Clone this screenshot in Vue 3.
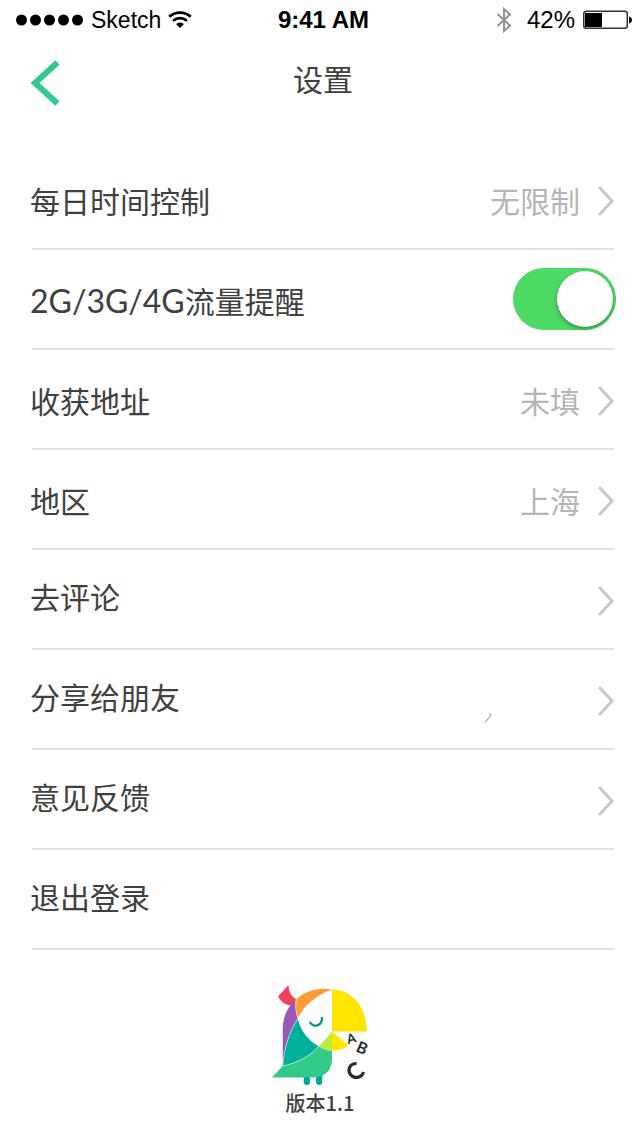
<script setup>
import { ref } from 'vue'

const reminder = ref(true)

const rows = [
  { id: 'limit', label: '每日时间控制', value: '无限制', kind: 'link' },
  { id: 'data', prefix: '2G/3G/4G', label: '流量提醒', kind: 'switch' },
  { id: 'address', label: '收获地址', value: '未填', kind: 'link' },
  { id: 'region', label: '地区', value: '上海', kind: 'link' },
  { id: 'review', label: '去评论', kind: 'link', compact: true },
  { id: 'share', label: '分享给朋友', kind: 'link', compact: true, tick: true },
  { id: 'feedback', label: '意见反馈', kind: 'link', compact: true },
  { id: 'logout', label: '退出登录', kind: 'action', compact: true }
]
</script>

<template>
  <div class="screen">
    <div class="status">
      <div class="carrier">
        <svg class="dots" viewBox="0 0 68 12" aria-hidden="true">
          <circle v-for="n in 5" :key="n" :cx="14 * n - 8.5" cy="6" r="5.5" />
        </svg>
        <span>Sketch</span>
        <svg class="wifi" viewBox="0 0 24 18" aria-hidden="true">
          <path d="M1.2 5.8C7 .2 17 .2 22.800 5.800" />
          <path d="M5 9.900C9 6.200 15 6.200 19 9.900" />
          <path class="solid" d="M8 13Q12 10 16 13L12 17Z" />
        </svg>
      </div>
      <strong class="clock">9:41 AM</strong>
      <div class="power">
        <svg class="bluetooth" viewBox="0 0 16 26" aria-hidden="true">
          <path d="M1.500 7L14 18.500L8 24V2L14 7.500L1.500 19" />
        </svg>
        <span>42%</span>
        <svg class="battery" viewBox="0 0 49 20" aria-hidden="true">
          <rect class="case" x=".75" y="1.250" width="43.500" height="17" rx="2.500" />
          <rect x="2" y="3" width="17" height="14" />
          <path d="M46 6.500Q49 7.500 49 10T46 13.500Z" />
        </svg>
      </div>
    </div>

    <header class="bar">
      <button class="back" type="button" aria-label="返回">
        <svg viewBox="0 0 30 46" aria-hidden="true"><path d="M27.500 2.500L5 23L27.500 43.500" /></svg>
      </button>
      <h1>设置</h1>
    </header>

    <ul class="list">
      <li v-for="row in rows" :key="row.id">
        <label v-if="row.kind === 'switch'" class="row">
          <span class="label"><span class="latin">{{ row.prefix }}</span>{{ row.label }}</span>
          <input v-model="reminder" class="switch" type="checkbox" role="switch" />
        </label>
        <button v-else-if="row.kind === 'action'" type="button" class="row compact">
          <span class="label">{{ row.label }}</span>
        </button>
        <a v-else class="row" :class="{ compact: row.compact }" :href="'#' + row.id">
          <span class="label">{{ row.label }}</span>
          <span v-if="row.value" class="value">{{ row.value }}</span>
          <svg v-if="row.tick" class="tick" viewBox="0 0 8 12" aria-hidden="true">
            <path d="M1 10.500L6 4.500L6.500 1.500" />
          </svg>
          <svg class="chevron" viewBox="0 0 16 30" aria-hidden="true"><path d="M2 2L14 15L2 28" /></svg>
        </a>
      </li>
    </ul>

    <footer class="about">
      <svg class="logo" viewBox="272 985 96 101" aria-hidden="true">
        <path fill="#00a896" d="M303.700 1075H310V1082Q310 1085 306.900 1085T303.700 1082ZM316 1075H322.300V1082Q322.300 1085 319.200 1085T316 1082Z" />
        <path fill="#f2415d" d="M288.500 985L278 996.500C281 1001.500 285 1005 291 1005.500L296.300 999.500C291 996 288.500 991 288.500 985Z" />
        <path fill="#ff9a35" d="M296 999.500C306 990 319 987 332 989.500C316 995 303.500 1006 297.700 1018.500Q294.500 1008 296 999.500Z" />
        <path fill="#9b59b6" d="M296 999.500C287 1007 282.700 1018 282.700 1029V1066C284 1048 289 1033 297.700 1018.500Q294.500 1008 296 999.500Z" />
        <path fill="#ffe600" d="M332 989.500C351 989.500 366.700 1006 366.700 1031.500H332Z" />
        <path fill="#00b09b" d="M297.700 1018.500C300.500 1031 308 1040 318.700 1046.500C309 1057 297 1063 282.700 1066C284 1048 289 1033 297.700 1018.500Z" />
        <path fill="#30cb8b" d="M272 1077.500L282.700 1066C297 1063 309 1057 318.700 1046.500Q325 1050.500 332 1050.800V1059C332 1070 325 1077.500 313 1077.500Z" />
        <path fill="#b8ed3e" d="M332 1031.500L318.700 1046.500Q325 1050.500 332 1050.800Z" />
        <path fill="#ffe600" d="M332 1031.500L348.700 1045.500Q341 1051 332 1050.800Z" />
        <path fill="none" stroke="#f4f4e8" stroke-width=".6" d="M296 999.500Q294.500 1008 297.700 1018.500C289 1033 284 1048 282.700 1066C297 1063 309 1057 318.700 1046.500L332 1031.500" />
        <path fill="none" stroke="#009688" stroke-width="2.300" d="M309.700 1022C313 1027.500 322.500 1027 322 1017" />
        <g class="letters">
          <text x="351.500" y="1043" font-size="13" transform="rotate(-14 351.500 1039)">A</text>
          <text x="362" y="1053.500" font-size="16" transform="rotate(24 362 1048)">B</text>
        </g>
        <path fill="none" stroke="#2b2b2b" stroke-width="3.200" d="M356.500 1063.500C349 1063.500 347.500 1070.500 350.500 1074.500C354 1079 361.500 1078.500 363.500 1072" />
      </svg>
      <span>版本1.1</span>
    </footer>
  </div>
</template>

<style>
body {
  background: #fff;
}
</style>

<style scoped>
.screen {
  min-height: 100vh;
  box-sizing: border-box;
  background: #fff;
  color: #404040;
  font-family: "Noto Sans CJK SC", sans-serif;
}
svg {
  display: block;
  flex: none;
}
.status {
  display: grid;
  grid-template-columns: 1fr auto 1fr;
  align-items: center;
  height: 40px;
  padding: 0 9px 0 16px;
  color: #000;
  font: 24px/40px "Liberation Sans", Arial, sans-serif;
}
.carrier,
.power {
  display: flex;
  align-items: center;
}
.carrier {
  gap: 7px;
  font-size: 23px;
}
.power {
  justify-content: flex-end;
  gap: 8px;
  margin-right: -1px;
}
.dots {
  width: 68px;
  height: 12px;
}
.wifi {
  width: 24px;
  height: 18px;
}
.wifi path {
  fill: none;
  stroke: #000;
  stroke-width: 2.6;
}
.wifi .solid {
  fill: #000;
  stroke: none;
}
.bluetooth {
  width: 16px;
  height: 26px;
  margin-right: 7px;
}
.bluetooth path {
  fill: none;
  stroke: #929292;
  stroke-width: 2;
}
.battery {
  width: 49px;
  height: 20px;
}
.battery .case {
  fill: none;
  stroke: #333;
  stroke-width: 1.5;
}
.bar {
  display: grid;
  grid-template-columns: 1fr auto 1fr;
  align-items: start;
  height: 92px;
  padding: 18px 24px 0 30px;
}
.back {
  justify-self: start;
  padding: 2px 0;
  border: 0;
  background: none;
}
.back svg {
  width: 30px;
  height: 46px;
}
.back path {
  fill: none;
  stroke: #30cb8b;
  stroke-width: 6;
}
h1 {
  margin: 0;
  font-size: 30px;
  line-height: 40px;
  font-weight: 400;
}
.list {
  margin: 0;
  padding: 0 26px 0 30px;
  list-style: none;
}
.list li::after {
  content: "";
  display: block;
  height: 2px;
  margin-left: 2px;
  background: #e2e2e2;
}
.row {
  display: flex;
  align-items: center;
  gap: 18px;
  box-sizing: border-box;
  width: 100%;
  height: 98px;
  padding: 4px 0 0;
  border: 0;
  background: none;
  color: inherit;
  font: inherit;
  font-size: 30px;
  line-height: 40px;
  text-align: left;
  text-decoration: none;
}
.label {
  flex: 1;
}
.label,
.value {
  padding-bottom: 2px;
}
.compact .label {
  padding-bottom: 10px;
}
.latin {
  font-family: Lato, "Noto Sans", sans-serif;
  font-size: 32px;
}
.value {
  color: #b5b5b5;
}
.chevron {
  width: 16px;
  height: 30px;
}
.chevron path {
  fill: none;
  stroke: #c7c7c7;
  stroke-width: 3;
  stroke-linecap: round;
}
.tick {
  align-self: flex-end;
  width: 8px;
  height: 12px;
  margin: 0 88px 24px 0;
}
.tick path {
  fill: none;
  stroke: #8c8c8c;
  stroke-width: 1;
}
.switch {
  appearance: none;
  flex: none;
  width: 103px;
  height: 62px;
  margin: 0 -2px 4px 0;
  padding: 3px;
  border-radius: 31px;
  background: #ddd;
}
.switch::before {
  content: "";
  display: block;
  width: 56px;
  height: 56px;
  border-radius: 50%;
  background: #fff;
  box-shadow: 0 2px 4px rgba(0, 0, 0, 0.35);
}
.switch:checked {
  background: #4cd964;
}
.switch:checked::before {
  margin-left: auto;
}
.about {
  display: flex;
  flex-direction: column;
  align-items: center;
  padding-top: 35px;
  font-size: 20px;
  line-height: 34px;
  font-weight: 500;
}
.logo {
  width: 96px;
  height: 101px;
  overflow: visible;
}
.letters {
  fill: #2b2b2b;
  font-family: Lato, sans-serif;
  font-weight: 700;
  text-anchor: middle;
}
</style>
